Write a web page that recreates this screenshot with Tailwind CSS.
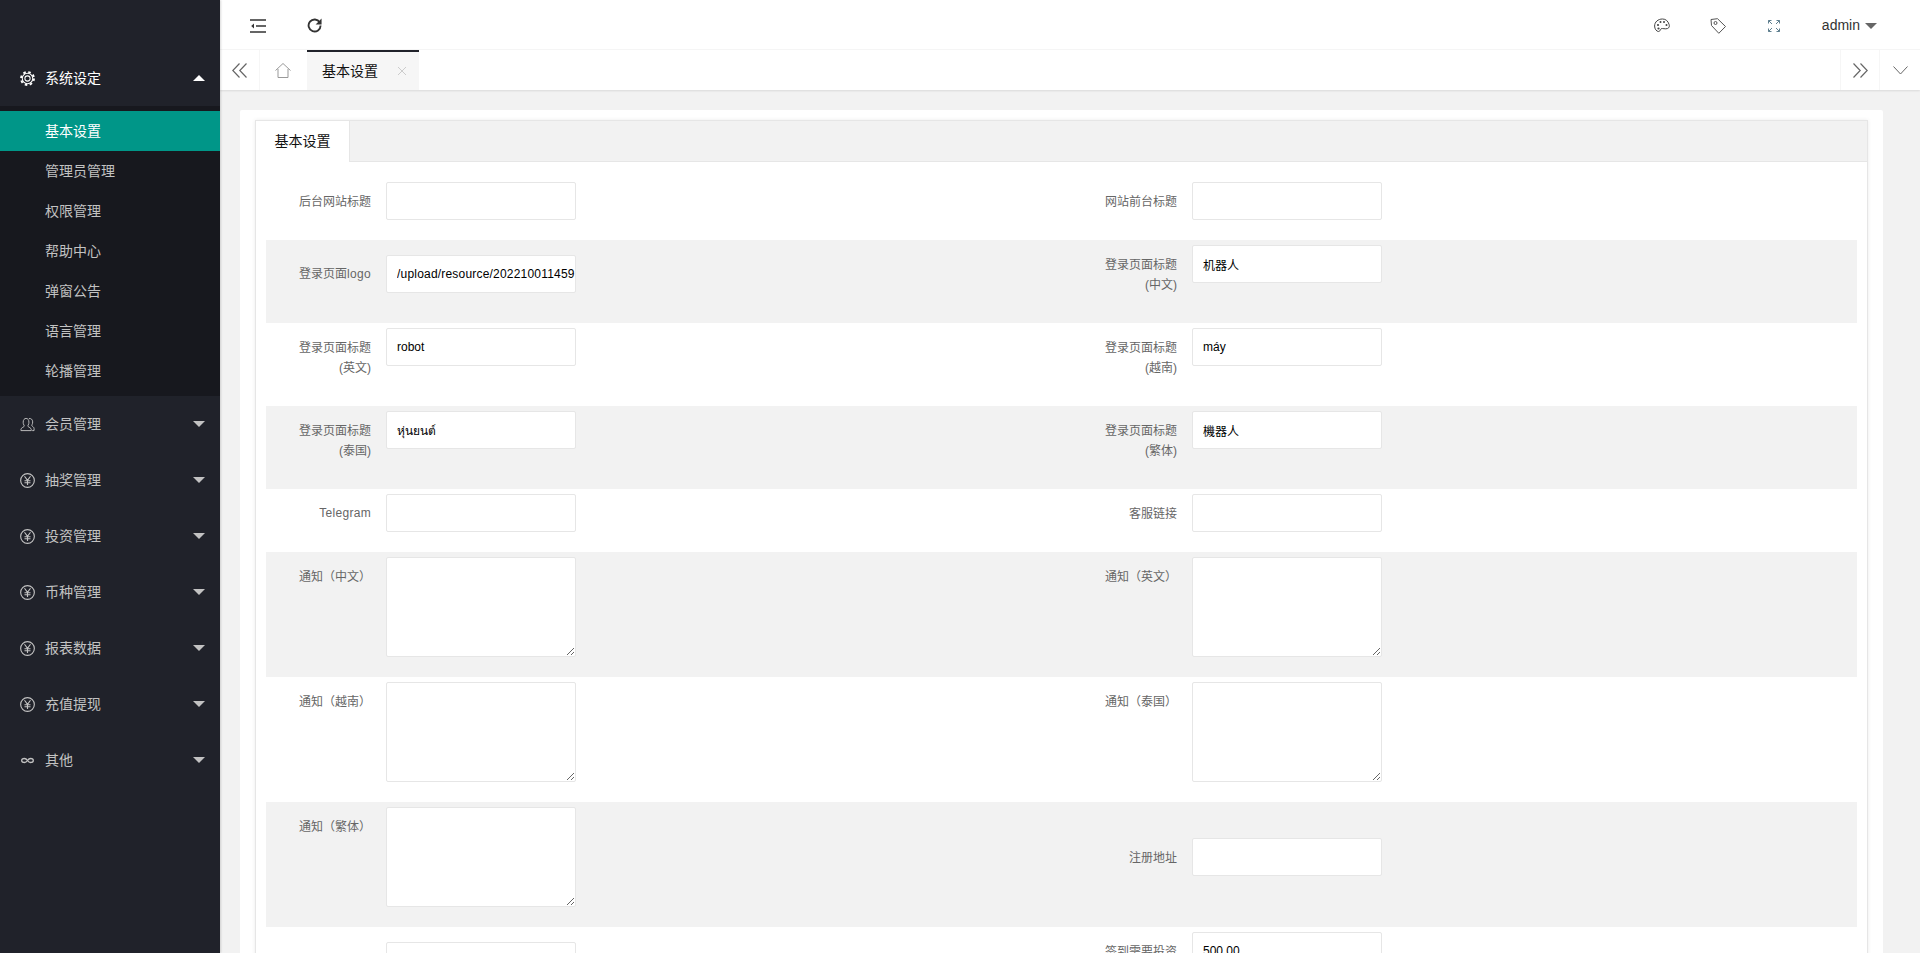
<!DOCTYPE html>
<html lang="zh-CN">
<head>
    <meta charset="UTF-8">
    <meta name="viewport" content="width=device-width, initial-scale=1.0">
    <title>基本设置</title>
    <script src="https://cdn.jsdelivr.net/npm/@tailwindcss/browser@4"></script>
</head>
<body class="h-[953px] overflow-hidden flex bg-[#f2f2f2] text-[12px] font-['Liberation_Sans','Noto_Sans_CJK_SC',sans-serif]">

    <!-- sidebar -->
    <aside class="w-[220px] shrink-0 bg-[#20222a] text-[14px] text-[#c2c2c2] pt-[50px] shadow-[1px_0_2px_rgba(0,0,0,0.15)] z-10">
        <div class="h-[56px] flex items-center text-white">
            <svg class="ml-[20px] w-[15px] h-[15px] shrink-0" viewBox="0 0 16 16" fill="none" stroke="currentColor"><circle cx="8" cy="8" r="5.600" stroke-width="1.100"/><circle cx="8" cy="8" r="6.900" stroke-width="2" stroke-dasharray="2.700 2.720"/><circle cx="8" cy="8" r="2.800" stroke-width="1.100"/></svg>
            <span class="ml-[10px] flex-1">系统设定</span>
            <i class="mr-[15px] w-0 h-0 border-x-[6px] border-x-transparent border-b-[6px] border-b-white"></i>
        </div>
        <ul class="bg-[#17181e] py-[5px]">
            <li class="h-[40px] leading-[40px] pl-[45px] bg-[#009688] text-white">基本设置</li>
            <li class="h-[40px] leading-[40px] pl-[45px]">管理员管理</li>
            <li class="h-[40px] leading-[40px] pl-[45px]">权限管理</li>
            <li class="h-[40px] leading-[40px] pl-[45px]">帮助中心</li>
            <li class="h-[40px] leading-[40px] pl-[45px]">弹窗公告</li>
            <li class="h-[40px] leading-[40px] pl-[45px]">语言管理</li>
            <li class="h-[40px] leading-[40px] pl-[45px]">轮播管理</li>
        </ul>
        <div class="h-[56px] flex items-center">
            <svg class="ml-[20px] w-[15px] h-[15px] shrink-0" viewBox="0 0 16 16" fill="none" stroke="currentColor" stroke-width="1"><path d="M1 14.500v-1.200c0-1.600 2.600-2.400 3.300-3.200.4-.6.2-1-.2-1.600C3.500 7.600 3.400 6.500 3.400 5.500 3.400 3 4.700 1.500 6.500 1.500s3 1.500 3 4c0 1-.1 2.100-.7 3-.4.600-.6 1-.2 1.600.7.800 3.400 1.600 3.400 3.200v1.200z"/><path d="M9.500 1.700c2-.5 4 .8 4 3.500 0 1-.1 2-.6 2.800-.4.600-.5 1.100-.1 1.600.5.600 2.200 1.200 2.200 2.700v2.200h-2"/></svg>
            <span class="ml-[10px] flex-1">会员管理</span>
            <i class="mr-[15px] w-0 h-0 border-x-[6px] border-x-transparent border-t-[6px] border-t-[#c2c2c2]"></i>
        </div>
        <div class="h-[56px] flex items-center">
            <svg class="ml-[20px] w-[15px] h-[15px] shrink-0" viewBox="0 0 16 16" fill="none" stroke="currentColor" stroke-width="1.200"><circle cx="8" cy="8" r="7.300"/><path d="M4.800 3.500L8 7.800l3.200-4.300M8 7.800v5M4.800 8.200h6.400M4.800 10.400h6.400"/></svg>
            <span class="ml-[10px] flex-1">抽奖管理</span>
            <i class="mr-[15px] w-0 h-0 border-x-[6px] border-x-transparent border-t-[6px] border-t-[#c2c2c2]"></i>
        </div>
        <div class="h-[56px] flex items-center">
            <svg class="ml-[20px] w-[15px] h-[15px] shrink-0" viewBox="0 0 16 16" fill="none" stroke="currentColor" stroke-width="1.200"><circle cx="8" cy="8" r="7.300"/><path d="M4.800 3.500L8 7.800l3.200-4.300M8 7.800v5M4.800 8.200h6.400M4.800 10.400h6.400"/></svg>
            <span class="ml-[10px] flex-1">投资管理</span>
            <i class="mr-[15px] w-0 h-0 border-x-[6px] border-x-transparent border-t-[6px] border-t-[#c2c2c2]"></i>
        </div>
        <div class="h-[56px] flex items-center">
            <svg class="ml-[20px] w-[15px] h-[15px] shrink-0" viewBox="0 0 16 16" fill="none" stroke="currentColor" stroke-width="1.200"><circle cx="8" cy="8" r="7.300"/><path d="M4.800 3.500L8 7.800l3.200-4.300M8 7.800v5M4.800 8.200h6.400M4.800 10.400h6.400"/></svg>
            <span class="ml-[10px] flex-1">币种管理</span>
            <i class="mr-[15px] w-0 h-0 border-x-[6px] border-x-transparent border-t-[6px] border-t-[#c2c2c2]"></i>
        </div>
        <div class="h-[56px] flex items-center">
            <svg class="ml-[20px] w-[15px] h-[15px] shrink-0" viewBox="0 0 16 16" fill="none" stroke="currentColor" stroke-width="1.200"><circle cx="8" cy="8" r="7.300"/><path d="M4.800 3.500L8 7.800l3.200-4.300M8 7.800v5M4.800 8.200h6.400M4.800 10.400h6.400"/></svg>
            <span class="ml-[10px] flex-1">报表数据</span>
            <i class="mr-[15px] w-0 h-0 border-x-[6px] border-x-transparent border-t-[6px] border-t-[#c2c2c2]"></i>
        </div>
        <div class="h-[56px] flex items-center">
            <svg class="ml-[20px] w-[15px] h-[15px] shrink-0" viewBox="0 0 16 16" fill="none" stroke="currentColor" stroke-width="1.200"><circle cx="8" cy="8" r="7.300"/><path d="M4.800 3.500L8 7.800l3.200-4.300M8 7.800v5M4.800 8.200h6.400M4.800 10.400h6.400"/></svg>
            <span class="ml-[10px] flex-1">充值提现</span>
            <i class="mr-[15px] w-0 h-0 border-x-[6px] border-x-transparent border-t-[6px] border-t-[#c2c2c2]"></i>
        </div>
        <div class="h-[56px] flex items-center">
            <svg class="ml-[21px] mr-[1px] w-[13px] h-[15px] shrink-0" viewBox="0 0 13 15" fill="none" stroke="currentColor" stroke-width="1.300"><path d="M6.500 7.500C5.500 6 4.600 5.500 3.400 5.500 1.900 5.500 .7 6.300 .7 7.500s1.200 2 2.700 2c1.200 0 2.100-.5 3.100-2 1-1.500 1.900-2 3.100-2 1.500 0 2.700.8 2.700 2s-1.200 2-2.700 2c-1.200 0-2.100-.5-3.100-2z"/></svg>
            <span class="ml-[10px] flex-1">其他</span>
            <i class="mr-[15px] w-0 h-0 border-x-[6px] border-x-transparent border-t-[6px] border-t-[#c2c2c2]"></i>
        </div>
    </aside>

    <div class="flex-1 min-w-0 flex flex-col">
        <!-- header -->
        <header class="h-[50px] shrink-0 bg-white flex items-center pt-[2px] border-b border-[#f6f6f6] text-[#333]">
            <svg class="ml-[30px] w-[16px] h-[14px]" viewBox="0 0 16 14" fill="none" stroke="currentColor" stroke-width="1.500"><path d="M0 1h16M6 7h10M0 13h16"/><path d="M4 4.500L1.200 7 4 9.500z" fill="currentColor" stroke="none"/></svg>
            <svg class="ml-[41px] w-[15px] h-[15px]" viewBox="0 0 16 16" fill="none" stroke="currentColor" stroke-width="2"><path d="M13.600 4.700A6.400 6.400 0 1 0 14.500 8"/><path d="M15.500 .5v6.300H9.200z" fill="currentColor" stroke="none"/></svg>
            <div class="ml-auto flex items-center">
                <svg class="w-[16px] h-[15px]" viewBox="0 0 16 15" fill="none" stroke="#444" stroke-width="1"><path d="M8.500 1C4 1 .6 4 .6 8c0 3 1.900 5.500 4 5.500 1.700 0 1.300-2 2.500-2.700 1.500-.8 4 .6 6.500-.3 1.800-.7 2-2.500 1.500-4C14 3 11.800 1 8.500 1z"/><circle cx="4" cy="7" r="1.100" fill="#444" stroke="none"/><circle cx="6.500" cy="4" r="1" fill="#444" stroke="none"/><circle cx="10" cy="4" r="1" fill="#444" stroke="none"/><circle cx="12.500" cy="7" r="1" fill="#444" stroke="none"/><circle cx="4.500" cy="10.500" r="1.100" fill="#444" stroke="none"/></svg>
                <svg class="ml-[40px] w-[16px] h-[16px]" viewBox="0 0 16 16" fill="none" stroke="#555" stroke-width="1"><path d="M1 1.500l6.500-.8 8 7.800-6.700 6.800-7.300-7.800z"/><circle cx="5.500" cy="5" r="1.500"/></svg>
                <svg class="ml-[42px] w-[12px] h-[12px]" viewBox="0 0 12 12" fill="none" stroke="#5f7f8f" stroke-width="1"><path d="M.5 3.500v-3h3M.5.500l3.500 3.500M8.500.500h3v3M11.500.500L8 4M.5 8.500v3h3M.5 11.500L4 8M11.500 8.500v3h-3M11.500 11.500L8 8"/></svg>
                <span class="ml-[42px] text-[14px] text-[#333]">admin</span>
                <i class="ml-[5px] mr-[43px] w-0 h-0 border-x-[6px] border-x-transparent border-t-[6px] border-t-[#666]"></i>
            </div>
        </header>

        <!-- tab bar -->
        <div class="h-[40px] shrink-0 bg-white flex shadow-[0_1px_2px_rgba(0,0,0,0.1)] z-[5] text-[14px]">
            <div class="w-[40px] border-r border-[#f6f6f6] flex items-center justify-center">
                <svg class="w-[15px] h-[15px]" viewBox="0 0 15 15" fill="none" stroke="#666" stroke-width="1.200"><path d="M7.500 .5L.8 7.500l6.700 7M14.500 .5L7.800 7.500l6.700 7"/></svg>
            </div>
            <div class="w-[47px] flex items-center justify-center">
                <svg class="-ml-[1px] w-[16px] h-[15px]" viewBox="0 0 16 15" fill="none" stroke="#999" stroke-width="1"><path d="M.5 7.500L8 .5l7.500 7M3 6v8.500h10V6"/></svg>
            </div>
            <div class="w-[112px] bg-[#f6f6f6] border-t-2 border-[#20222a] flex items-center pl-[15px] text-[#111]">
                <span>基本设置</span>
                <svg class="ml-[20px] w-[8px] h-[8px]" viewBox="0 0 8 8" stroke="#ccc" stroke-width="1"><path d="M0 0l8 8M8 0L0 8"/></svg>
            </div>
            <div class="ml-auto w-[40px] border-x border-[#f6f6f6] flex items-center justify-center">
                <svg class="w-[15px] h-[15px]" viewBox="0 0 15 15" fill="none" stroke="#666" stroke-width="1.200"><path d="M.5 .5l6.700 7-6.700 7M7.500 .5l6.700 7-6.700 7"/></svg>
            </div>
            <div class="w-[40px] flex items-center justify-center">
                <svg class="w-[15px] h-[9px]" viewBox="0 0 15 9" fill="none" stroke="#666" stroke-width="1"><path d="M.5 .5l7 7.500 7-7.500"/></svg>
            </div>
        </div>

        <!-- content -->
        <main class="flex-1 min-h-0 overflow-hidden pt-5 pl-5 pr-[37px]">
            <div class="bg-white rounded-[2px] pt-[10px] px-[15px]">
                <div class="border border-[#e6e6e6] shadow-[0_0_4px_rgba(0,0,0,0.08)]">
                    <div class="h-[41px] bg-[#f2f2f2] border-b border-[#e6e6e6]">
                        <div class="w-[94px] h-[41px] bg-white border-r border-[#e6e6e6] text-[14px] text-[#111] flex items-center justify-center">基本设置</div>
                    </div>
                    <div class="px-[10px] pt-[15px] text-[#666]">

                        <div class="flex items-center pt-[5px] pb-[20px]">
                            <div class="w-[806px] flex items-start">
                                <label class="w-[120px] pr-[15px] pt-[10px] pb-[8px] leading-5 text-right">后台网站标题</label>
                                <input class="w-[190px] h-[38px] bg-white border border-[#e6e6e6] rounded-[2px] pl-[10px] text-[#000]">
                            </div>
                            <div class="flex items-start">
                                <label class="w-[120px] pr-[15px] pt-[10px] pb-[8px] leading-5 text-right">网站前台标题</label>
                                <input class="w-[190px] h-[38px] bg-white border border-[#e6e6e6] rounded-[2px] pl-[10px] text-[#000]">
                            </div>
                        </div>

                        <div class="flex items-center pt-[5px] pb-[20px] bg-[#f2f2f2]">
                            <div class="w-[806px] flex items-start">
                                <label class="w-[120px] pr-[15px] py-[9px] leading-5 text-right">登录页面<span class="tracking-[0.3px]">logo</span></label>
                                <input class="w-[190px] h-[38px] bg-white border border-[#e6e6e6] rounded-[2px] pl-[10px] text-[#000] tracking-[0.2px]" value="/upload/resource/20221001145912.png">
                            </div>
                            <div class="flex items-start">
                                <label class="w-[120px] pr-[15px] pt-[10px] pb-[8px] leading-5 text-right">登录页面标题<br>(中文)</label>
                                <input class="w-[190px] h-[38px] bg-white border border-[#e6e6e6] rounded-[2px] pl-[10px] text-[#000]" value="机器人">
                            </div>
                        </div>

                        <div class="flex items-center pt-[5px] pb-[20px]">
                            <div class="w-[806px] flex items-start">
                                <label class="w-[120px] pr-[15px] pt-[10px] pb-[8px] leading-5 text-right">登录页面标题<br>(英文)</label>
                                <input class="w-[190px] h-[38px] bg-white border border-[#e6e6e6] rounded-[2px] pl-[10px] text-[#000]" value="robot">
                            </div>
                            <div class="flex items-start">
                                <label class="w-[120px] pr-[15px] pt-[10px] pb-[8px] leading-5 text-right">登录页面标题<br>(越南)</label>
                                <input class="w-[190px] h-[38px] bg-white border border-[#e6e6e6] rounded-[2px] pl-[10px] text-[#000]" value="máy">
                            </div>
                        </div>

                        <div class="flex items-center pt-[5px] pb-[20px] bg-[#f2f2f2]">
                            <div class="w-[806px] flex items-start">
                                <label class="w-[120px] pr-[15px] pt-[10px] pb-[8px] leading-5 text-right">登录页面标题<br>(泰国)</label>
                                <input class="w-[190px] h-[38px] bg-white border border-[#e6e6e6] rounded-[2px] pl-[10px] text-[#000]" value="หุ่นยนต์">
                            </div>
                            <div class="flex items-start">
                                <label class="w-[120px] pr-[15px] pt-[10px] pb-[8px] leading-5 text-right">登录页面标题<br>(繁体)</label>
                                <input class="w-[190px] h-[38px] bg-white border border-[#e6e6e6] rounded-[2px] pl-[10px] text-[#000]" value="機器人">
                            </div>
                        </div>

                        <div class="flex items-center pt-[5px] pb-[20px]">
                            <div class="w-[806px] flex items-start">
                                <label class="w-[120px] pr-[15px] py-[9px] leading-5 text-right tracking-[0.3px]">Telegram</label>
                                <input class="w-[190px] h-[38px] bg-white border border-[#e6e6e6] rounded-[2px] pl-[10px] text-[#000]">
                            </div>
                            <div class="flex items-start">
                                <label class="w-[120px] pr-[15px] pt-[10px] pb-[8px] leading-5 text-right">客服链接</label>
                                <input class="w-[190px] h-[38px] bg-white border border-[#e6e6e6] rounded-[2px] pl-[10px] text-[#000]">
                            </div>
                        </div>

                        <div class="flex items-center pt-[5px] pb-[20px] bg-[#f2f2f2]">
                            <div class="w-[806px] flex items-start">
                                <label class="w-[120px] pl-[33px] pt-[10px] pb-[8px] leading-5">通知（中文）</label>
                                <textarea class="w-[190px] h-[100px] bg-white border border-[#e6e6e6] rounded-[2px]"></textarea>
                            </div>
                            <div class="flex items-start">
                                <label class="w-[120px] pl-[33px] pt-[10px] pb-[8px] leading-5">通知（英文）</label>
                                <textarea class="w-[190px] h-[100px] bg-white border border-[#e6e6e6] rounded-[2px]"></textarea>
                            </div>
                        </div>

                        <div class="flex items-center pt-[5px] pb-[20px]">
                            <div class="w-[806px] flex items-start">
                                <label class="w-[120px] pl-[33px] pt-[10px] pb-[8px] leading-5">通知（越南）</label>
                                <textarea class="w-[190px] h-[100px] bg-white border border-[#e6e6e6] rounded-[2px]"></textarea>
                            </div>
                            <div class="flex items-start">
                                <label class="w-[120px] pl-[33px] pt-[10px] pb-[8px] leading-5">通知（泰国）</label>
                                <textarea class="w-[190px] h-[100px] bg-white border border-[#e6e6e6] rounded-[2px]"></textarea>
                            </div>
                        </div>

                        <div class="flex items-center pt-[5px] pb-[20px] bg-[#f2f2f2]">
                            <div class="w-[806px] flex items-start">
                                <label class="w-[120px] pl-[33px] pt-[10px] pb-[8px] leading-5">通知（繁体）</label>
                                <textarea class="w-[190px] h-[100px] bg-white border border-[#e6e6e6] rounded-[2px]"></textarea>
                            </div>
                            <div class="flex items-start">
                                <label class="w-[120px] pr-[15px] pt-[10px] pb-[8px] leading-5 text-right">注册地址</label>
                                <input class="w-[190px] h-[38px] bg-white border border-[#e6e6e6] rounded-[2px] pl-[10px] text-[#000]">
                            </div>
                        </div>

                        <div class="flex items-center pt-[5px] pb-[20px]">
                            <div class="w-[806px] flex items-start">
                                <label class="w-[120px] pr-[15px] py-[9px] leading-5 text-right"></label>
                                <input class="w-[190px] h-[38px] bg-white border border-[#e6e6e6] rounded-[2px] pl-[10px] text-[#000]">
                            </div>
                            <div class="flex items-start">
                                <label class="w-[120px] pr-[15px] pt-[10px] pb-[8px] leading-5 text-right">签到需要投资<br>&nbsp;</label>
                                <input class="w-[190px] h-[38px] bg-white border border-[#e6e6e6] rounded-[2px] pl-[10px] text-[#000]" value="500.00">
                            </div>
                        </div>

                    </div>
                </div>
            </div>
        </main>
    </div>
</body>
</html>
